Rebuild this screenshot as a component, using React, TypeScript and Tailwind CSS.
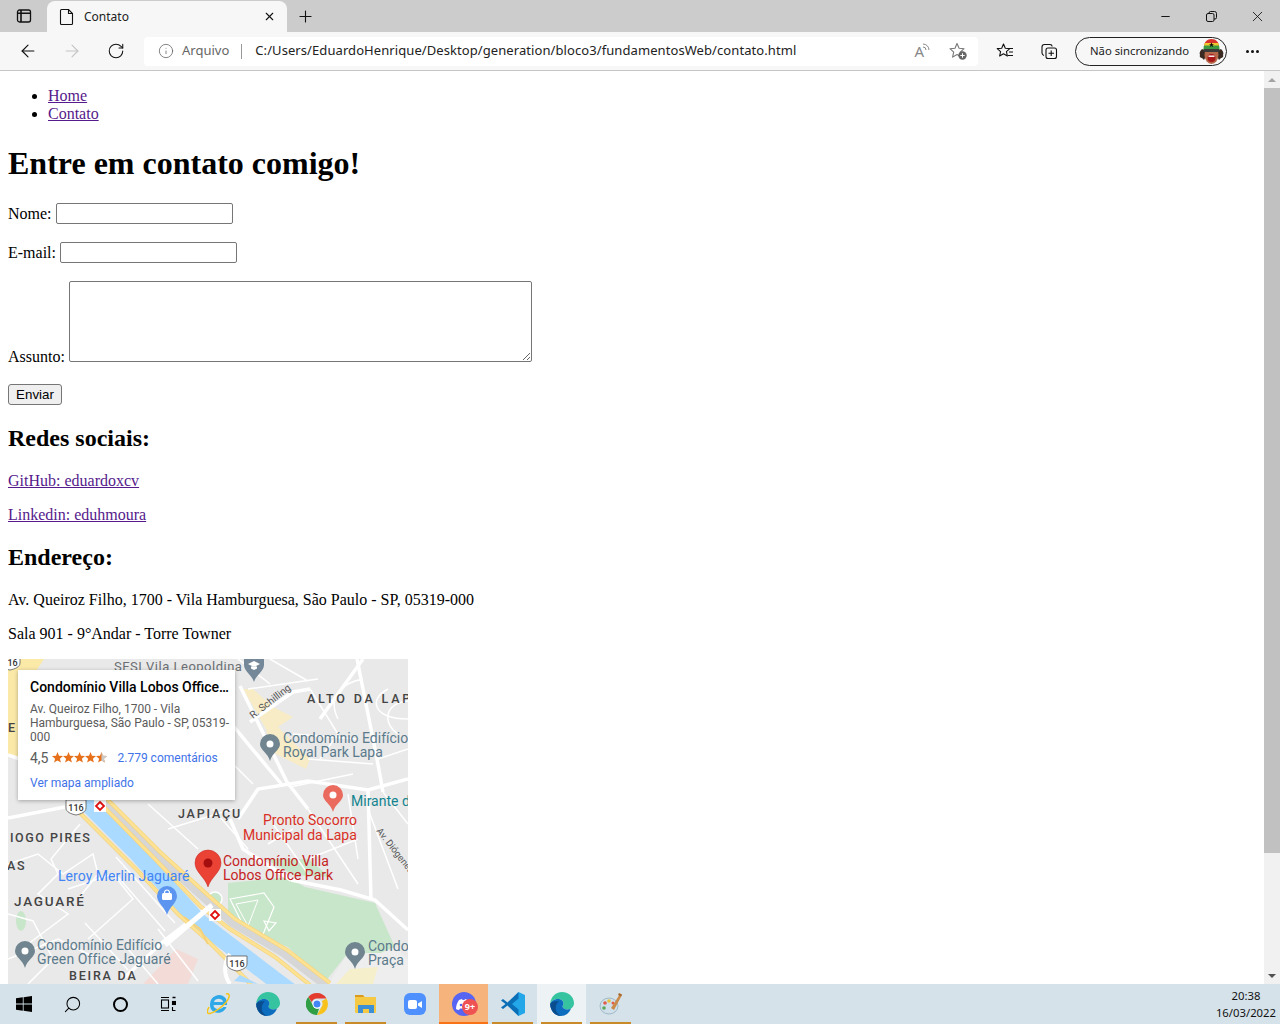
import { ArrowLeft, ArrowRight, RotateCw, Info, Plus, X, Minus, Search } from 'lucide-react';
import type { ReactNode } from 'react';

function BrowserBar() {
  return (
    <div className="font-['Noto_Sans',sans-serif]">
      {/* abas */}
      <div className="flex h-8 items-end bg-[#cccccc]">
        <div className="flex h-8 w-[47px] items-center justify-center">
          <svg width="16" height="16" viewBox="0 0 16 16" fill="none" stroke="#111" strokeWidth="1.3">
            <rect x="1.500" y="2" width="13" height="12" rx="2" />
            <path d="M1.500 5.200h13M5 2v12" strokeWidth="1.600" />
          </svg>
        </div>
        <div className="flex h-[31px] w-[240px] items-center rounded-t-lg bg-[#f7f7f7] pl-[12px] pr-[11px]">
          <svg width="16" height="18" viewBox="0 0 16 18" fill="none" stroke="#111" strokeWidth="1.100">
            <path d="M2.500 1.500h7l4 4v10a1 1 0 0 1-1 1h-10a1 1 0 0 1-1-1v-13a1 1 0 0 1 1-1z" />
            <path d="M9.500 1.500v4h4" />
          </svg>
          <span className="ml-[9px] flex-1 text-[12px] text-[#222]">Contato</span>
          <X size={13} color="#111" strokeWidth={2} />
        </div>
        <div className="flex h-8 w-9 items-center justify-center">
          <Plus size={19} color="#111" strokeWidth={1.400} />
        </div>
        <div className="flex-1" />
        <div className="flex h-8 items-center text-[#111]">
          <div className="flex w-[46px] justify-center"><Minus size={13} strokeWidth={1.800} /></div>
          <div className="flex w-[46px] justify-center">
            <svg width="11" height="11" viewBox="0 0 11 11" fill="none" stroke="#111">
              <rect x="0.500" y="2.500" width="7.500" height="8" rx="1.500" />
              <path d="M3 2.500v-.5a1.500 1.500 0 0 1 1.500-1.500h4a2 2 0 0 1 2 2v4a1.500 1.500 0 0 1-1.500 1.500H8" />
            </svg>
          </div>
          <div className="flex w-[46px] justify-center"><X size={17} strokeWidth={1.200} /></div>
        </div>
      </div>
      {/* barra de endereco */}
      <div className="flex h-[39px] items-center border-b border-[#c6c6c6] bg-[#f7f7f7]">
        <div className="flex w-[56px] justify-center"><ArrowLeft size={20} color="#111" strokeWidth={1.400} /></div>
        <div className="-ml-[6px] flex w-[44px] justify-center"><ArrowRight size={20} color="#c4c4c4" strokeWidth={1.400} /></div>
        <div className="flex w-[44px] justify-center"><RotateCw size={18} color="#111" strokeWidth={1.400} /></div>
        <div className="ml-[6px] flex h-[29px] w-[834px] items-center rounded-[4px] bg-white pl-[14px]">
          <Info size={16} color="#666" strokeWidth={1.200} />
          <span className="ml-[8px] text-[13px] text-[#666]">Arquivo</span>
          <div className="ml-[12px] h-[15px] w-px bg-[#999]" />
          <span className="ml-[13px] flex-1 text-[13px] tracking-[0.08px] text-[#222]">C:/Users/EduardoHenrique/Desktop/generation/bloco3/fundamentosWeb/contato.html</span>
          <span className="relative mr-[18px] text-[15px] leading-none text-[#888]">
            A
            <svg className="absolute -right-[6px] -top-[1px]" width="8" height="8" viewBox="0 0 8 8" fill="none" stroke="#888">
              <path d="M1 1a6 6 0 0 1 6 6M1 4a3 3 0 0 1 3 3" />
            </svg>
          </span>
          <svg className="mr-[10px] ml-[6px]" width="20" height="20" viewBox="0 0 20 20" fill="none">
            <path d="M9 2.500l2.100 4.700 5 .5-3.800 3.400 1.100 5-4.400-2.600-4.400 2.600 1.100-5L2 7.700l5-.5z" stroke="#777" strokeWidth="1.100" strokeLinejoin="round" />
            <circle cx="14.500" cy="14.500" r="4.200" fill="#666" />
            <path d="M14.500 12.300v4.400M12.300 14.500h4.400" stroke="#fff" strokeWidth="1" />
          </svg>
        </div>
        <div className="flex w-[54px] justify-center">
          <svg width="18" height="18" viewBox="0 0 18 18" fill="none" stroke="#111" strokeWidth="1.100" strokeLinejoin="round">
            <path d="M7.500 2l1.800 4.200 4.500.4-3.400 3 1 4.400-3.900-2.300L3.600 14l1-4.400-3.400-3 4.500-.4z" />
            <path d="M12 6.500h5M13 10h4M12 13.500h5" />
          </svg>
        </div>
        <div className="flex w-[34px] justify-center">
          <svg width="18" height="18" viewBox="0 0 18 18" fill="none" stroke="#111" strokeWidth="1.100">
            <path d="M4 13.500C2.500 13 2 12 2 11V5c0-1.500 1-2.500 2.500-2.500H10c1 0 2 .5 2.200 2" />
            <rect x="6" y="6" width="10.500" height="10.500" rx="2" />
            <path d="M11.200 8.500v5.500M8.500 11.200H14" />
          </svg>
        </div>
        <div className="relative ml-[9px] flex h-[29px] w-[152px] items-center rounded-full border border-[#222] bg-[#f7f7f7] pl-[14px]">
          <span className="flex-1 text-[11.300px] text-[#222]">Não sincronizando</span>
          <svg className="absolute right-[2px] top-0" width="25" height="27" viewBox="0 0 25 27">
            <path d="M3 11C1 13 0 15 1 17c-1 2 1 3 2 3l2 2 4-8zM22 11c2 2 3 4 2 6 1 2-1 3-2 3l-2 2-4-8z" fill="#3a2a22" />
            <ellipse cx="12.500" cy="17" rx="7" ry="9" fill="#b5694a" />
            <path d="M5 9c0-5 3-8 7.500-8S20 4 20 9z" fill="#d9342b" />
            <path d="M5 9c0-2 .3-3 1-4h13c.7 1 1 2 1 4z" fill="#f0c72e" />
            <path d="M4.500 12c0-2 0-2.500.5-4.500h15c.5 2 .5 2.500.5 4.500z" fill="#3c9a41" />
            <path d="M12.500 4.500l.8 1.800h1.700l-1.400 1 .5 1.700-1.600-1-1.600 1 .5-1.700-1.400-1h1.700z" fill="#111" />
            <rect x="4.500" y="11" width="16" height="3" rx="1" fill="#3a3a3a" />
            <ellipse cx="12.500" cy="20" rx="4" ry="4" fill="#a81818" />
            <rect x="9.500" y="17.500" width="6" height="1.400" fill="#fff" />
          </svg>
        </div>
        <div className="ml-[8px] flex w-[34px] justify-center gap-[2px]">
          <span className="h-[3px] w-[3px] rounded-full bg-[#111]" />
          <span className="h-[3px] w-[3px] rounded-full bg-[#111]" />
          <span className="h-[3px] w-[3px] rounded-full bg-[#111]" />
        </div>
      </div>
    </div>
  );
}

function Pin({ x, y, color, dot = '#fff' }: { x: number; y: number; color: string; dot?: string }) {
  // y = centro da cabeca do pino
  return (
    <g transform={`translate(${x} ${y})`}>
      <path d="M0 17C-2 9-10 6-10 0a10 10 0 0 1 20 0c0 6-8 9-10 17z" fill={color} />
      <circle r="3.500" fill={dot} />
    </g>
  );
}

function Shield({ x, y }: { x: number; y: number }) {
  return (
    <g transform={`translate(${x} ${y})`}>
      <path d="M-10-7h20v8c0 4-5 6-10 7-5-1-10-3-10-7z" fill="#fff" stroke="#555" strokeWidth="0.800" />
      <text x="0" y="3.500" textAnchor="middle" fontSize="9" fontWeight="500" fill="#333">116</text>
    </g>
  );
}

function Diamond({ x, y }: { x: number; y: number }) {
  return (
    <g transform={`translate(${x} ${y})`}>
      <rect x="-6" y="-6" width="12" height="12" fill="#fff" />
      <path d="M0-4L4 0 0 4-4 0z" fill="#fff" stroke="#e01010" strokeWidth="1.800" />
    </g>
  );
}

const wideRoads = [
  'M0 159L57 148',
  'M200 248L157 281L117 318',
  'M283 221L333 231L367 241L400 271',
  'M232 27L279 123L300 150',
  'M360 131L363 241',
  'M349 0L369 100L375 133',
  'M222 63L275 127',
  'M242 63L285 33L302 30',
  'M312 60L355 0',
  'M230 160L250 130L300 122L360 131L400 120',
  'M0 96L12 100',
  'M222 160L235 190L283 221',
];

const thinRoads = [
  'M72 165L43 200L50 215L30 235L60 255L20 285',
  'M0 205L30 195L55 215L85 195L90 215L70 240',
  'M108 198L167 264',
  'M110 218L157 272',
  'M77 264L120 311',
  'M60 230L105 215L125 240L80 280',
  'M0 255L25 262L45 300L20 325',
  'M0 300L50 280L90 300',
  'M120 290L150 325',
  'M150 270L190 322',
  'M230 0L262 25',
  'M262 0L300 22',
  'M302 30L330 75L312 100',
  'M285 75L349 80',
  'M300 100L365 105',
  'M282 128L345 115',
  'M380 30C360 40 365 60 400 60',
  'M400 42C375 45 375 65 390 75',
  'M355 20C330 25 320 40 330 60',
  'M370 100L400 90',
  'M375 133L400 165',
  'M360 150L390 230',
  'M340 135L350 200',
  'M300 150L350 225',
  'M265 165L300 215',
  'M260 185L285 170',
  'M300 200L350 180',
  'M240 30L310 20',
  'M225 105L245 125',
  'M160 170L225 150',
  'M140 145L190 190',
  'M205 150L240 190',
];

function MapDrawing() {
  const alongRiver = {
    a: 'M97 138L152 193L202 238L227 260L279 291L322 324',
    b: 'M90 142L147 200L192 247L222 270L267 298L302 326',
    c: 'M68 150L128 210L170 255L198 280L238 320L246 330',
  };
  return (
    <svg className="block font-['Roboto',sans-serif]" width="400" height="325" viewBox="0 0 400 325">
      <rect width="400" height="325" fill="#e9e9e9" />
      {/* areas amarelas e verdes */}
      <path d="M0 0H36L28 12L10 40L16 70L10 98H0z" fill="#fbe9a8" />
      <path d="M235 30L258 70L262 92L298 110L302 100L270 68L285 58L265 48L245 30z" fill="#f7ecc5" />
      <path d="M220 224L280 218L297 228L367 244L387 288L373 294L340 294L317 323L280 288L243 274L220 258z" fill="#c8e6c9" />
      <path d="M258 200H300L322 218L285 216z" fill="#c8e6c9" />
      <path d="M373 294L387 288L400 300V325H320L340 294z" fill="#eeeeee" />
      <path d="M328 325L342 310L370 308L365 325z" fill="#f6efcb" />
      <path d="M168 290L190 300L180 325H135z" fill="#f3dcd8" />
      <ellipse cx="13" cy="262" rx="5" ry="10" fill="#c8e6c9" />
      {/* ruas */}
      {wideRoads.map((d) => <path key={d} d={d} fill="none" stroke="#fff" strokeWidth="3.500" />)}
      {thinRoads.map((d) => <path key={d} d={d} fill="none" stroke="#fff" strokeWidth="1.500" />)}
      {/* campo */}
      <path d="M222 240l34-6 10 14-12 30-18-10z" fill="none" stroke="#fff" strokeWidth="1.200" />
      <path d="M228 245l22-4-10 26z" fill="none" stroke="#fff" strokeWidth="1" />
      <ellipse cx="207" cy="240" rx="7" ry="7" fill="#c8e6c9" stroke="#fff" strokeWidth="1.500" />
      <path d="M256 262l12 2-7 8z" fill="none" stroke="#fff" strokeWidth="1.200" />
      {/* rio e marginais */}
      <path d={alongRiver.a} stroke="#d6d6d6" strokeWidth="9" fill="none" transform="translate(-3 3)" />
      <path d="M70 135L130 195L190 262L267 321L290 338" stroke="#aadaff" strokeWidth="17" fill="none" />
      {Object.values(alongRiver).map((d) => <path key={d} d={d} stroke="#f5d27a" strokeWidth="4" fill="none" />)}
      {Object.values(alongRiver).map((d) => <path key={`${d}i`} d={d} stroke="#fde293" strokeWidth="2.800" fill="none" />)}
      <path d="M176 258L192 270L200 285" stroke="#f5d27a" strokeWidth="2" fill="none" />
      <path d="M204 246L157 286" stroke="#fff" strokeWidth="5" fill="none" />
      <path d="M222 325c-6-8-7-20 0-30" stroke="#fff" strokeWidth="4" fill="none" />
      <path d="M226 322l6-6 18 9z" fill="#aadaff" />
      <Shield x={68} y={148} />
      <Shield x={229} y={304} />
      <Shield x={2} y={3} />
      <Diamond x={92} y={147} />
      <Diamond x={207} y={256} />
      {/* rotulos */}
      <text x="106" y="12" fontSize="13" letterSpacing="0.500" fill="#6b6f74">SESI Vila Leopoldina</text>
      <g transform="translate(246 6)">
        <path d="M0 17C-2 10-10 6-10 0v-10h20V0c0 6-8 10-10 17z" fill="#74889a" />
        <path d="M-6-1l6-3 6 3-6 3zM-3 1.500v2l3 1.500 3-1.500v-2" fill="#fff" />
      </g>
      <text x="299" y="44" fontSize="12.500" fontWeight="500" letterSpacing="2.800" fill="#444">ALTO DA LAPA</text>
      <text x="245" y="60" fontSize="10" fill="#555" transform="rotate(-38 245 60)">R. Schilling</text>
      <Pin x={262} y={85} color="#70858f" />
      <text x="275" y="84" fontSize="14" fill="#5b7a8c">Condomínio Edifício</text>
      <text x="275" y="98" fontSize="14" fill="#5b7a8c">Royal Park Lapa</text>
      <Pin x={325} y={136} color="#ea6a5e" />
      <text x="343" y="147" fontSize="14" fill="#12848f">Mirante do</text>
      <text x="170" y="159" fontSize="12.500" fontWeight="500" letterSpacing="1.800" fill="#444">JAPIAÇU</text>
      <text x="255" y="166" fontSize="14" fill="#d93025">Pronto Socorro</text>
      <text x="235" y="181" fontSize="14" fill="#d93025">Municipal da Lapa</text>
      <text x="2" y="183" fontSize="12.500" fontWeight="500" letterSpacing="1.500" fill="#444">IOGO PIRES</text>
      <text x="368" y="172" fontSize="9.500" fill="#555" transform="rotate(52 368 172)">Av. Diógenes</text>
      <text x="-1" y="211" fontSize="12.500" fontWeight="500" letterSpacing="1.800" fill="#444">AS</text>
      <text x="50" y="222" fontSize="14" letterSpacing="0.050" fill="#4285f4">Leroy Merlin Jaguaré</text>
      <g transform="translate(200 204)">
        <path d="M0 24C-3 14-13 9-13 0a13 13 0 0 1 26 0c0 9-10 14-13 24z" fill="#ea4335" stroke="#c5221f" strokeWidth="0.500" />
        <circle r="4.500" fill="#a50e0e" />
      </g>
      <text x="215" y="207" fontSize="14" fill="#c5221f">Condomínio Villa</text>
      <text x="215" y="221" fontSize="14" fill="#c5221f">Lobos Office Park</text>
      <g transform="translate(159 237)">
        <path d="M0 19C-2 11-10 7-10 0a10 10 0 0 1 20 0c0 7-8 11-10 19z" fill="#5b95f0" />
        <rect x="-5" y="-3" width="10" height="7" rx="1.500" fill="#fff" />
        <path d="M-2.500-3c0-4 5-4 5 0" fill="none" stroke="#fff" strokeWidth="1.200" />
      </g>
      <text x="6" y="247" fontSize="13.500" fontWeight="500" letterSpacing="1.800" fill="#444">JAGUARÉ</text>
      <Pin x={17} y={292} color="#70858f" />
      <text x="29" y="291" fontSize="14" fill="#5b7a8c">Condomínio Edifício</text>
      <text x="29" y="305" fontSize="14" letterSpacing="0.100" fill="#5b7a8c">Green Office Jaguaré</text>
      <text x="61" y="321" fontSize="12.500" fontWeight="500" letterSpacing="1.800" fill="#444">BEIRA DA</text>
      <text x="73" y="334" fontSize="12.500" fontWeight="500" letterSpacing="1.800" fill="#444">LINHA</text>
      <Pin x={347} y={293} color="#70858f" />
      <text x="360" y="292" fontSize="14" fill="#5b7a8c">Condomínio</text>
      <text x="360" y="306" fontSize="14" fill="#5b7a8c">Praça</text>
      <text x="0" y="73" fontSize="12.500" fontWeight="500" fill="#444">E</text>
    </svg>
  );
}

function Stars() {
  const star = 'M5.500 0l1.500 3.800 4 .3-3.100 2.600 1 3.900-3.400-2.100-3.400 2.100 1-3.900L0 4.100l4-.3z';
  return (
    <svg className="ml-[3px]" width="55" height="11" viewBox="0 0 55 11">
      {[0, 11, 22, 33, 44].map((x) => <path key={x} d={star} transform={`translate(${x} 0)`} fill="#e7711b" />)}
      <path d={star} transform="translate(44 0)" fill="#c9c9c9" clipPath="inset(0 0 0 5.500px)" />
    </svg>
  );
}

function MapCard() {
  return (
    <div className="absolute left-[10px] top-[11px] h-[130px] w-[217px] bg-white pl-3 pr-[5px] pt-[9px] font-['Roboto',sans-serif] shadow-[0_1px_4px_rgba(0,0,0,0.3)]">
      <p className="truncate text-[14px] font-medium leading-[17px] text-black">Condomínio Villa Lobos Office...</p>
      <p className="mt-[6px] text-[12px] leading-[14px] text-[#5b5b5b]">
        Av. Queiroz Filho, 1700 - Vila Hamburguesa, São Paulo - SP, 05319-000
      </p>
      <div className="mt-[7px] flex h-[14px] items-center text-[14px] text-[#5b5b5b]">
        <span>4,5</span>
        <Stars />
        <span className="ml-[11px] text-[12px] text-[#3f73e8]">2.779 comentários</span>
      </div>
      <p className="mt-[11px] text-[12px] leading-[14px] text-[#3f73e8]">Ver mapa ampliado</p>
    </div>
  );
}

function Page() {
  return (
    <div className="min-w-0 flex-1 overflow-hidden bg-white p-2 font-['Liberation_Serif',serif] text-[16px] leading-[normal] text-black">
      <ul className="my-2 list-disc pl-10">
        <li><a className="text-[#551a8b] underline">Home</a></li>
        <li><a className="text-[#551a8b] underline">Contato</a></li>
      </ul>
      <h1 className="mb-[20.440px] mt-[22.440px] text-[32px] font-bold">Entre em contato comigo!</h1>
      <form>
        <p className="my-4 pb-[2px]">
          Nome: <input type="text" className="h-[21px] w-[177px] rounded-[2px] border border-[#767676] bg-white" />
        </p>
        <p className="my-4 pb-[2px]">
          E-mail: <input type="text" className="h-[21px] w-[177px] rounded-[2px] border border-[#767676] bg-white" />
        </p>
        <p className="my-4 pb-[2px]">
          Assunto: <textarea className="inline-block h-[81px] w-[463px] rounded-[2px] border border-[#767676] bg-white align-baseline" />
        </p>
        <button type="button" className="h-[21px] w-[54px] rounded-[3px] border border-[#767676] bg-[#efefef] font-['Liberation_Sans',sans-serif] text-[13.330px] leading-none text-black">
          Enviar
        </button>
      </form>
      <h2 className="my-[19.920px] text-[24px] font-bold">Redes sociais:</h2>
      <p className="my-4"><a className="text-[#551a8b] underline">GitHub: eduardoxcv</a></p>
      <p className="my-4"><a className="text-[#551a8b] underline">Linkedin: eduhmoura</a></p>
      <h2 className="my-[19.920px] text-[24px] font-bold">Endereço:</h2>
      <p className="my-4">Av. Queiroz Filho, 1700 - Vila Hamburguesa, São Paulo - SP, 05319-000</p>
      <p className="my-4">Sala 901 - 9°Andar - Torre Towner</p>
      <div className="relative h-[325px] w-[400px] overflow-hidden">
        <MapDrawing />
        <MapCard />
      </div>
    </div>
  );
}

function Scrollbar() {
  return (
    <div className="flex w-4 flex-col items-center bg-[#f1f1f1]">
      <div className="flex h-[17px] w-4 items-center justify-center">
        <div className="h-0 w-0 border-x-[4px] border-b-[4px] border-x-transparent border-b-[#a3a3a3]" />
      </div>
      <div className="h-[765px] w-4 bg-[#c1c1c1]" />
      <div className="flex-1" />
      <div className="flex h-[17px] w-4 items-center justify-center">
        <div className="h-0 w-0 border-x-[4px] border-t-[4px] border-x-transparent border-t-[#505050]" />
      </div>
    </div>
  );
}

function TaskItem({ children, open, className = '' }: { children: ReactNode; open?: boolean; className?: string }) {
  return (
    <div className={`relative flex h-10 w-[49px] items-center justify-center ${className}`}>
      {children}
      {open && <div className="absolute inset-x-[4px] bottom-0 h-[2px] bg-[#c98a2a]" />}
    </div>
  );
}

const EdgeIcon = (
  <svg width="24" height="24" viewBox="0 0 24 24">
    <path d="M12 0C18 0 24 4.500 24 11c0 4-3 6.500-6.500 6.500-3 0-5-1.500-5-3 0-1 1-1.200 1-3C13.500 9 11 7 8 7 4 7 1 9.500.2 12 .4 5.500 5.500 0 12 0z" fill="#36c4a0" />
    <path d="M.2 12C1 9.500 4 7 8 7c3 0 5.500 2 5.500 4.500 0 1.800-1 2-1 3 0 1.500 2 3 5 3 1.200 0 2.500-.3 3.500-1-1.500 4.500-5.500 7.500-10 7.500C5 24 .2 18.500.2 12z" fill="#0c6cbd" />
    <path d="M.2 12C.2 18.500 5 24 11 24c-4-2-6-6-5-10 .4-2 1.500-3.500 3-4.500C5 8.500 1 10 .2 12z" fill="#0a4d8f" />
  </svg>
);

function Taskbar() {
  return (
    <div className="flex h-10 items-center bg-[#d5e2ea] font-['Noto_Sans',sans-serif]">
      <div className="flex h-10 w-12 items-center justify-center">
        <svg width="16" height="16" viewBox="0 0 16 16" fill="#000">
          <path d="M0 2.300l6.800-1v6.300H0zM7.600 1.200L16 0v7.600H7.600zM0 8.400h6.800v6.300l-6.800-1zM7.600 8.400H16V16l-8.400-1.200z" />
        </svg>
      </div>
      <div className="flex h-10 w-12 items-center justify-center">
        <Search size={19} color="#000" strokeWidth={1.300} className="-scale-x-100" />
      </div>
      <div className="flex h-10 w-12 items-center justify-center">
        <div className="h-[15px] w-[15px] rounded-full border-2 border-black" />
      </div>
      <div className="mr-[2px] flex h-10 w-12 items-center justify-center">
        <svg width="16" height="16" viewBox="0 0 16 16" fill="none" stroke="#000" strokeWidth="1.100">
          <path d="M1 1.500h8M1 14.500h8" />
          <rect x="1.500" y="4" width="7" height="8" />
          <path d="M12.500 1.500h3" strokeWidth="1.500" />
          <rect x="12.500" y="5.500" width="3" height="3" fill="#000" />
          <path d="M12.500 11v3.500h3" />
        </svg>
      </div>
      <TaskItem>
        <svg width="24" height="24" viewBox="0 0 24 24" fill="none">
          <path d="M3 12a9 9 0 0 1 15-6.500c1.500 1.500 2 4 2 7.500H6.500c0 4 5.500 6 10 2h3c-2.500 6-9 7-13 4.500C3.500 18 3 15 3 12zM7 10h9c-.5-4-8-4.500-9 0z" fill="#2fa8e8" />
          <path d="M19 2c3-1 4 1 2.500 4.500C19 12 9 20 3 21.500 0 22-.5 19.500 2 15" stroke="#f5c518" strokeWidth="1.500" />
        </svg>
      </TaskItem>
      <TaskItem>{EdgeIcon}</TaskItem>
      <TaskItem open>
        <svg width="22" height="22" viewBox="0 0 22 22">
          <path d="M11 0a11 11 0 0 1 9.500 5.500H11A5.500 5.500 0 0 0 5.800 9.200L2.300 4.100A11 11 0 0 1 11 0z" fill="#e33b2e" />
          <path d="M20.500 5.500A11 11 0 0 1 11 22l4.700-8.200A5.500 5.500 0 0 0 15.800 8z" fill="#f8c21c" />
          <path d="M11 22A11 11 0 0 1 2.300 4.100L7 12.500a5.500 5.500 0 0 0 6 3.300z" fill="#2f9e44" />
          <circle cx="11" cy="11" r="4.500" fill="#fff" />
          <circle cx="11" cy="11" r="3.500" fill="#4285f4" />
        </svg>
      </TaskItem>
      <TaskItem open>
        <svg width="22" height="20" viewBox="0 0 22 20">
          <path d="M0 2a1 1 0 0 1 1-1h7l2 2h11v15a1 1 0 0 1-1 1H1a1 1 0 0 1-1-1z" fill="#f6c945" />
          <path d="M0 1h8l1 2H0z" fill="#d99a1f" />
          <path d="M3 11h16v8h-5v-4H8v4H3z" fill="#3d8fd6" />
        </svg>
      </TaskItem>
      <TaskItem>
        <div className="flex h-[22px] w-[22px] items-center justify-center rounded-[6px] bg-[#4d90fe]">
          <svg width="14" height="9" viewBox="0 0 14 9" fill="#fff">
            <rect width="9" height="9" rx="2" />
            <path d="M10 3.500L14 1v7l-4-2.500z" />
          </svg>
        </div>
      </TaskItem>
      <div className="relative flex h-10 w-[49px] items-center justify-center bg-[#f6b37c]">
        <div className="flex h-6 w-6 items-center justify-center rounded-full bg-[#5865f2]">
          <svg width="15" height="11" viewBox="0 0 15 11" fill="#fff">
            <path d="M3 1c1-.5 2-.8 3-1l.5 1h2L9 0c1 .2 2 .5 3 1 2 3 3 6 3 9-1 .5-2 1-3 1l-1-1.500H4L3 11c-1 0-2-.5-3-1 0-3 1-6 3-9z" />
            <circle cx="5" cy="6" r="1.300" fill="#5865f2" />
            <circle cx="10" cy="6" r="1.300" fill="#5865f2" />
          </svg>
        </div>
        <div className="absolute left-[23px] top-[15px] flex h-[16px] w-[16px] items-center justify-center rounded-full bg-[#ee5253] text-[9px] font-bold text-white">9+</div>
        <div className="absolute inset-x-0 bottom-0 h-[2px] bg-[#f97316]" />
      </div>
      <TaskItem open>
        <svg width="24" height="24" viewBox="0 0 24 24">
          <path d="M17.500 0L24 3v18l-6.500 3L7 13.500z" fill="#23a7e8" />
          <path d="M17.500 0L6.500 10.500 2 7 0 8.500 4.500 12 0 15.500 2 17l4.500-3.500L17.500 24v-6.500L11 12l6.500-5.500z" fill="#0b6fb8" />
        </svg>
      </TaskItem>
      <TaskItem open className="bg-[#edf2f5]">{EdgeIcon}</TaskItem>
      <TaskItem open>
        <svg width="24" height="24" viewBox="0 0 24 24">
          <ellipse cx="10" cy="14" rx="9" ry="8" fill="#cfe0ea" stroke="#8aa7b8" strokeWidth="0.700" />
          <circle cx="6" cy="11" r="1.800" fill="#e25c4a" />
          <circle cx="10" cy="9" r="1.800" fill="#e8c13a" />
          <circle cx="5" cy="16" r="1.800" fill="#5aa85a" />
          <circle cx="14" cy="11" r="1.500" fill="#e25c4a" />
          <path d="M12 16L21 2l2 1-8 15z" fill="#c98a4a" />
          <path d="M20 1l3 1.500-1 2-3-1.500z" fill="#a86a2a" />
        </svg>
      </TaskItem>
      <div className="flex-1" />
      <div className="flex h-10 flex-col items-center justify-center pr-[4px] text-[11.300px] leading-[17px] text-[#111]">
        <span>20:38</span>
        <span>16/03/2022</span>
      </div>
    </div>
  );
}

export default function App() {
  return (
    <div className="flex h-[1024px] w-[1280px] flex-col overflow-hidden">
      <BrowserBar />
      <div className="flex min-h-0 flex-1">
        <Page />
        <Scrollbar />
      </div>
      <Taskbar />
    </div>
  );
}
